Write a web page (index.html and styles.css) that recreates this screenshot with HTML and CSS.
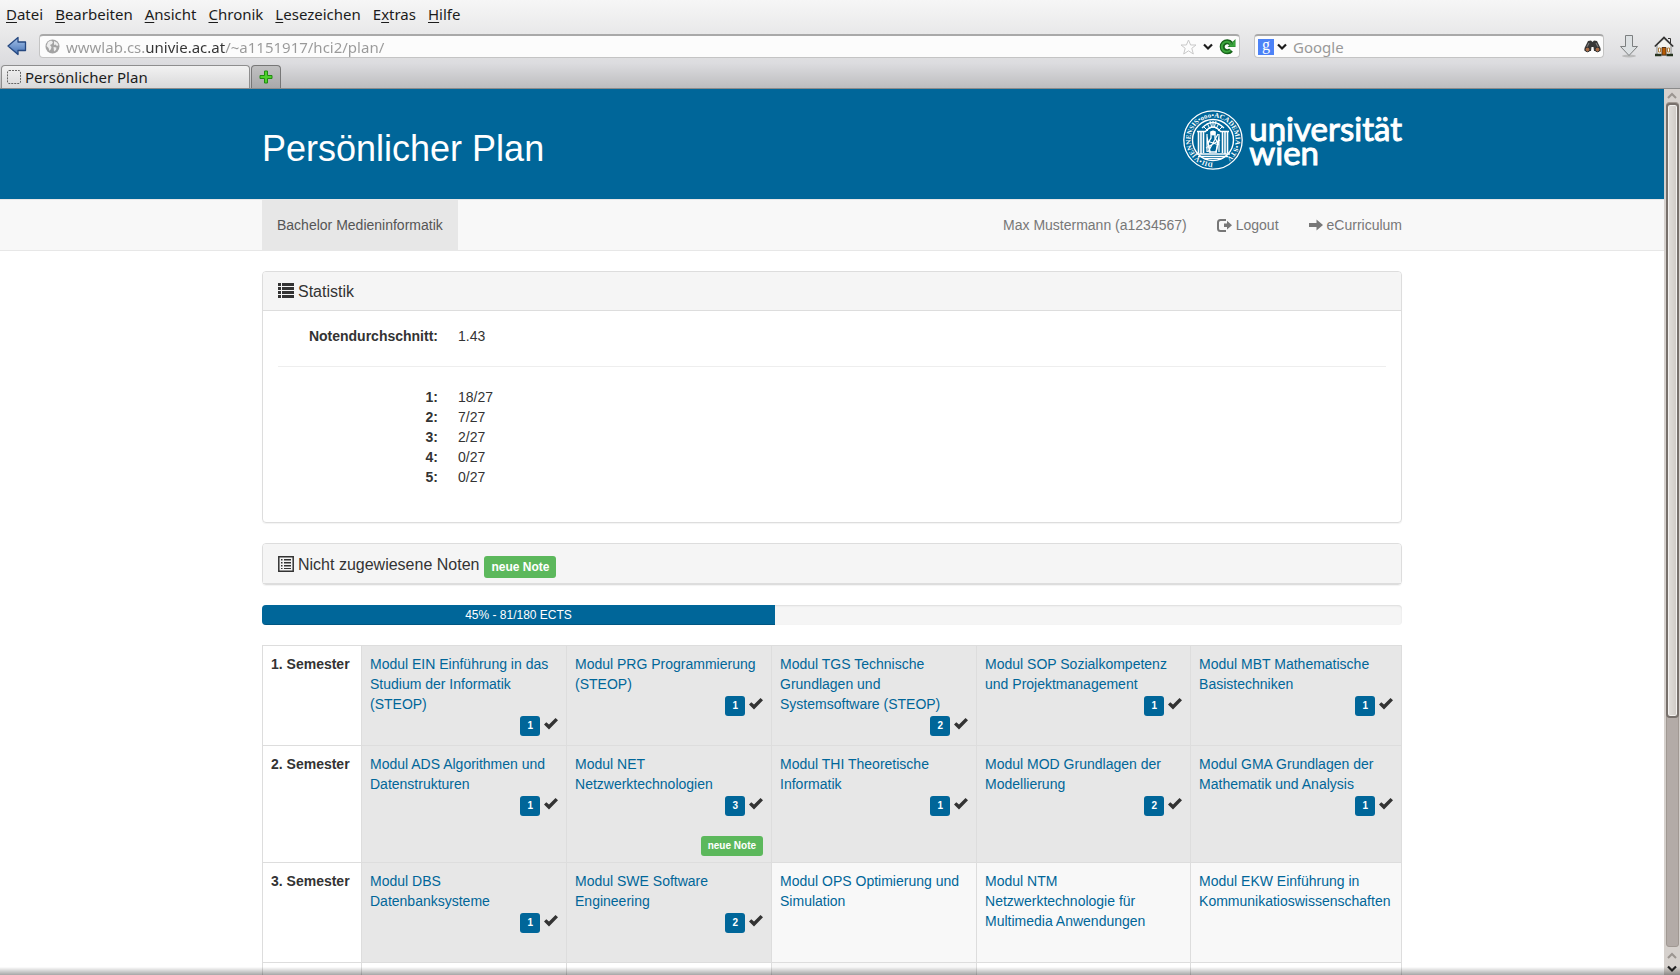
FILE: index.html
```html
<!DOCTYPE html>
<html lang="de">
<head>
<meta charset="utf-8">
<title>Persönlicher Plan</title>
<link rel="stylesheet" href="styles.css">
</head>
<body>
<svg class="sprite" aria-hidden="true">
  <symbol id="ok" viewBox="0 0 14 12"><path d="M0 6.500 2.300 4.200 5 6.500 11.500 0 14 2.300 5 11.500Z"/></symbol>
  <symbol id="chevron" viewBox="0 0 10 8"><path d="M1 1.500 5 5.500 9 1.500" fill="none" stroke="currentColor" stroke-width="2.200"/></symbol>
</svg>

<div class="chrome">
  <nav class="menubar" aria-label="Menü">
    <button><u>D</u>atei</button>
    <button><u>B</u>earbeiten</button>
    <button><u>A</u>nsicht</button>
    <button><u>C</u>hronik</button>
    <button><u>L</u>esezeichen</button>
    <button>E<u>x</u>tras</button>
    <button><u>H</u>ilfe</button>
  </nav>
  <div class="toolbar">
    <button class="tool" aria-label="Zurück">
      <svg width="20" height="20" viewBox="0 0 20 20"><defs><linearGradient id="gb" x2="0" y2="1"><stop stop-color="#a8c4ea"/><stop offset="1" stop-color="#4270b4"/></linearGradient></defs><path d="M1 10 11 1.500V6H18.500V14.500H11V18.500Z" fill="url(#gb)" stroke="#25477f" stroke-width="1.300" stroke-linejoin="round"/></svg>
    </button>
    <div class="field field-url">
      <svg width="15" height="15" viewBox="0 0 15 15"><circle cx="7.500" cy="7.500" r="7" fill="#a3a3a3"/><path d="M3 3 6 1.500 8 3 7 5 5 6 6.500 8 6 10 4.500 12 3.500 9 1.500 7ZM9 2 12 3.500 13.500 6 12 7 10.500 5.500 9 6ZM8.500 8 11.500 8.500 11 11 9 12.500Z" fill="#ededed"/></svg>
      <input class="url" type="text" aria-label="Adresse" value="wwwlab.cs.univie.ac.at/~a1151917/hci2/plan/">
      <button aria-label="Lesezeichen setzen"><svg width="17" height="16" viewBox="0 0 17 16"><path d="M8.500 1 10.600 6H16L11.800 9.300 13.300 15 8.500 11.800 3.700 15 5.200 9.300 1 6H6.400Z" fill="#fdfdfd" stroke="#c9c9c9" stroke-linejoin="round"/></svg></button>
      <button aria-label="Verlauf"><svg width="10" height="8"><use href="#chevron"/></svg></button>
      <button aria-label="Neu laden"><svg width="17" height="16" viewBox="0 0 17 16"><path d="M12 11A5 5 0 1 1 12 4.500" fill="none" stroke="#17621a" stroke-width="5"/><path d="M16.500 0V8H8.500Z" fill="#23842a"/><path d="M11.500 11.200A5 5 0 1 1 11.500 4.500M11 6.500H15V2.500" fill="none" stroke="#3ba63c" stroke-width="2"/></svg></button>
    </div>
    <div class="field field-search">
      <button class="engine" aria-label="Suchmaschine"><span>g</span><svg width="10" height="8"><use href="#chevron"/></svg></button>
      <input type="text" aria-label="Suche" placeholder="Google">
      <button aria-label="Suchen"><svg width="17" height="13" viewBox="0 0 17 13"><path d="M4 1 7 .5 8.500 2 10 .5 13 1 16.500 8V11H10L9.500 7H7.500L7 11H.5V8Z" fill="#383838"/><path d="M5 3 3 7M12 3 14 7" stroke="#8a8a8a"/><circle cx="3.500" cy="9.500" r="2.300" fill="#a86a45" stroke="#333"/><circle cx="13.500" cy="9.500" r="2.300" fill="#a86a45" stroke="#333"/></svg></button>
    </div>
    <button class="tool" aria-label="Downloads">
      <svg width="20" height="24" viewBox="0 0 20 24"><ellipse cx="10" cy="22" rx="7" ry="1.500" fill="#bbb"/><path d="M6.500 1.500H13.500V12.500H18.500L10 21.500 1.500 12.500H6.500Z" fill="#dde1e3" stroke="#7c7f80" stroke-linejoin="round"/></svg>
    </button>
    <button class="tool" aria-label="Startseite">
      <svg width="20" height="21" viewBox="0 0 20 21"><path d="M3 9 10 2.500 17 9V19H3Z" fill="#f3f3ef" stroke="#888"/><path d="M14 2.500H16.500V7" fill="#eee" stroke="#333"/><path d="M.8 10.500 10 1.500 19.200 10.500" fill="none" stroke="#333" stroke-width="1.700"/><path d="M8 11.500H12V19H8Z" fill="#b85a00" stroke="#59371b"/><path d="M4.500 12H6.500V16H4.500ZM13.500 12H15.500V16H13.500Z" fill="#fff" stroke="#b08040"/><path d="M1 19H7.500M12.500 19H19" stroke="#26331f" stroke-width="2.500"/></svg>
    </button>
  </div>
  <div class="tabs">
    <button class="tab"><svg width="14" height="14" viewBox="0 0 14 14"><rect x=".5" y=".5" width="13" height="13" rx="1.500" fill="none" stroke="#666" stroke-dasharray="2 1"/></svg>Persönlicher Plan</button>
    <button class="tab-new" aria-label="Neuer Tab"><svg width="14" height="14" viewBox="0 0 14 14"><path d="M5.500 1H8.500V5.500H13V8.500H8.500V13H5.500V8.500H1V5.500H5.500Z" fill="#4ed02c" stroke="#218a12" stroke-linejoin="round"/></svg></button>
  </div>
</div>

<div class="viewport">
  <div class="page">
    <header class="banner">
      <div class="container banner-row">
        <h1>Persönlicher Plan</h1>
        <a class="logo" href="#" aria-label="Universität Wien">
          <svg width="60" height="60" viewBox="0 0 60 60">
            <defs><path id="ring" d="M30 52.500A22.500 22.500 0 1 1 30.100 52.500"/></defs>
            <g fill="none" stroke="#fff">
              <circle cx="30" cy="30" r="29.200" stroke-width="1.300"/>
              <circle cx="30" cy="30" r="20.500" stroke-width="1.400"/>
              <path d="M15.500 22V43M18 21V44M20.500 22V43M39.500 22V43M42 21V44M44.500 22V43" stroke-width="1.600"/>
              <path d="M14 21.500H22M38 21.500H46M13 44H47M15 46.500H45M22 22Q30 12 38 22M19 18Q30 7 41 18" stroke-width="1.300"/>
              <path d="M30 11V18M27 11 29 18M33 11 31 18M24 13 27 19M36 13 33 19M20 16 25 21M40 16 35 21"/>
              <path d="M24 26 27 43M36 26 33 43M24 31 36 35M23 38 37 30M25 42 35 24M24 24V42M36 24V42M20 48.500H40" stroke-width="1.200"/>
              <path d="M28 22H32V28L35 33 33 42H27L25 33 28 28Z" stroke-width="1.400"/>
            </g>
            <circle cx="30" cy="23" r="2.500" fill="#fff"/>
            <text class="seal-text"><textPath href="#ring">DII•VIENNENSIS•ooo•ACADEMIA•STV</textPath></text>
          </svg>
          <span class="logo-text">universität<br>wien</span>
        </a>
      </div>
    </header>

    <nav class="navbar" aria-label="Navigation">
      <div class="container navbar-row">
        <a class="active" href="#">Bachelor Medieninformatik</a>
        <div class="nav-right">
          <a href="#">Max Mustermann (a1234567)</a>
          <a href="#"><svg width="15" height="13" viewBox="0 0 15 13"><path d="M9 1H3.500Q1 1 1 3.500V9.500Q1 12 3.500 12H9" fill="none" stroke="currentColor" stroke-width="2"/><path d="M7 4.500H10V1.800L15 6.200 10 10.600V8H7Z"/></svg>Logout</a>
          <a href="#"><svg width="14" height="12" viewBox="0 0 14 12"><path d="M0 4H7.500V.5L14 6 7.500 11.500V8H0Z"/></svg>eCurriculum</a>
        </div>
      </div>
    </nav>

    <main class="container">
      <section class="panel">
        <h3 class="panel-heading"><svg width="16" height="15" viewBox="0 0 16 15"><path d="M0 0H3V3H0ZM4 0H16V3H4ZM0 4H3V7H0ZM4 4H16V7H4ZM0 8H3V11H0ZM4 8H16V11H4ZM0 12H3V15H0ZM4 12H16V15H4Z"/></svg>Statistik</h3>
        <div class="panel-body">
          <dl><dt>Notendurchschnitt:</dt><dd>1.43</dd></dl>
          <hr>
          <dl>
            <dt>1:</dt><dd>18/27</dd>
            <dt>2:</dt><dd>7/27</dd>
            <dt>3:</dt><dd>2/27</dd>
            <dt>4:</dt><dd>0/27</dd>
            <dt>5:</dt><dd>0/27</dd>
          </dl>
        </div>
      </section>

      <section class="panel">
        <h3 class="panel-heading panel-closed"><svg width="16" height="16" viewBox="0 0 16 16"><path d="M.8.800H15.200V15.200H.8Z" fill="none" stroke="currentColor" stroke-width="1.500"/><path d="M3 3H4.500V4.500H3ZM6 3H13V4.500H6ZM3 6H4.500V7.500H3ZM6 6H13V7.500H6ZM3 9H4.500V10.500H3ZM6 9H13V10.500H6ZM3 12H4.500V13H3ZM6 12H13V13H6Z"/></svg>Nicht zugewiesene Noten <span class="label label-new label-large">neue Note</span></h3>
      </section>

      <div class="progress" role="progressbar" aria-valuenow="45" aria-valuemin="0" aria-valuemax="100">
        <div class="progress-bar" style="width:45%">45% - 81/180 ECTS</div>
      </div>

      <table class="plan">
        <colgroup><col class="c-sem"><col class="c-mod"><col class="c-mod"><col class="c-mod"><col class="c-wide"><col></colgroup>
        <tbody>
        <tr>
          <th scope="row">1. Semester</th>
          <td class="done"><a href="#">Modul EIN Einführung in das Studium der Informatik (STEOP)</a><div class="marks"><span class="label">1</span><svg><use href="#ok"/></svg></div></td>
          <td class="done"><a href="#">Modul PRG Programmierung (STEOP)</a><div class="marks"><span class="label">1</span><svg><use href="#ok"/></svg></div></td>
          <td class="done"><a href="#">Modul TGS Technische Grundlagen und Systemsoftware (STEOP)</a><div class="marks"><span class="label">2</span><svg><use href="#ok"/></svg></div></td>
          <td class="done"><a href="#">Modul SOP Sozialkompetenz und Projektmanagement</a><div class="marks"><span class="label">1</span><svg><use href="#ok"/></svg></div></td>
          <td class="done"><a href="#">Modul MBT Mathematische Basistechniken</a><div class="marks"><span class="label">1</span><svg><use href="#ok"/></svg></div></td>
        </tr>
        <tr>
          <th scope="row">2. Semester</th>
          <td class="done"><a href="#">Modul ADS Algorithmen und Datenstrukturen</a><div class="marks"><span class="label">1</span><svg><use href="#ok"/></svg></div></td>
          <td class="done"><a href="#">Modul NET Netzwerktechnologien</a><div class="marks"><span class="label">3</span><svg><use href="#ok"/></svg></div><div class="news"><span class="label label-new">neue Note</span></div></td>
          <td class="done"><a href="#">Modul THI Theoretische Informatik</a><div class="marks"><span class="label">1</span><svg><use href="#ok"/></svg></div></td>
          <td class="done"><a href="#">Modul MOD Grundlagen der Modellierung</a><div class="marks"><span class="label">2</span><svg><use href="#ok"/></svg></div></td>
          <td class="done"><a href="#">Modul GMA Grundlagen der Mathematik und Analysis</a><div class="marks"><span class="label">1</span><svg><use href="#ok"/></svg></div></td>
        </tr>
        <tr>
          <th scope="row">3. Semester</th>
          <td class="done"><a href="#">Modul DBS Datenbanksysteme</a><div class="marks"><span class="label">1</span><svg><use href="#ok"/></svg></div></td>
          <td class="done"><a href="#">Modul SWE Software Engineering</a><div class="marks"><span class="label">2</span><svg><use href="#ok"/></svg></div></td>
          <td class="open"><a href="#">Modul OPS Optimierung und Simulation</a></td>
          <td class="open"><a href="#">Modul NTM Netzwerktechnologie für Multimedia Anwendungen</a></td>
          <td class="open"><a href="#">Modul EKW Einführung in Kommunikatioswissenschaften</a></td>
        </tr>
        <tr><th></th><td></td><td></td><td class="open"></td><td></td><td></td></tr>
        </tbody>
      </table>
    </main>
  </div>
  <div class="scrollbar" aria-hidden="true">
    <svg class="dim" width="10" height="8" viewBox="0 0 10 8"><path d="M1 6 5 2 9 6" fill="none" stroke="currentColor" stroke-width="2"/></svg>
    <div class="trough"><div class="thumb"></div></div>
    <svg class="dim" width="10" height="8" viewBox="0 0 10 8"><path d="M1 6 5 2 9 6" fill="none" stroke="currentColor" stroke-width="2"/></svg>
    <svg width="10" height="8"><use href="#chevron"/></svg>
  </div>
</div>
<div class="edge-shadow"></div>
</body>
</html>
```
FILE: styles.css
```css
* { box-sizing: border-box; }
body {
  margin: 0;
  height: 100vh;
  display: flex;
  flex-direction: column;
  overflow: hidden;
  background: #fff;
  color: #333;
  font: 14px/20px "Liberation Sans", Arial, sans-serif;
}
a { color: #069; text-decoration: none; }
svg { fill: currentColor; flex: none; }
button { border: 0; padding: 0; background: none; font: inherit; color: inherit; display: flex; align-items: center; }
.sprite { position: absolute; width: 0; height: 0; }

/* Browser window */
.chrome {
  flex: none;
  height: 89px;
  display: flex;
  flex-direction: column;
  background: linear-gradient(#f6f6f6, #e8e8e9 40%, #dcdcdf 72%, #bdbdbf);
  border-bottom: 1px solid #8b8b8b;
  color: #1c1c1c;
  font: 15px/20px "Noto Sans", "Open Sans", sans-serif;
}
.menubar { display: flex; gap: 12px; padding: 4px 6px 0; height: 29px; }
.menubar button { display: block; height: 20px; }
.menubar u { text-underline-offset: 2px; }
.toolbar { display: flex; align-items: center; height: 34px; padding: 0 6px 0 7px; }
.tool { flex: none; }
.field {
  display: flex;
  align-items: center;
  height: 24px;
  background: #fcfcfc;
  border: 1px solid #c4c4c4;
  border-top: 2px solid #a9a9a9;
  border-radius: 4px;
  min-width: 0;
}
.field input {
  flex: 1;
  min-width: 0;
  border: 0;
  padding: 0;
  background: none;
  outline: 0;
  font: 15px/20px "Noto Sans", "Open Sans", sans-serif;
}
.field-url { flex: 1; margin: 0 14px 0 12px; padding: 0 3px 0 5px; gap: 6px; }
.field .url {
  color: transparent;
  background: linear-gradient(90deg, #999 79px, #333 79px, #333 159px, #999 159px);
  -webkit-background-clip: text;
  background-clip: text;
}
.field-search { width: 350px; margin-right: 15px; padding: 0 2px 0 3px; gap: 6px; }
.field-search input::placeholder { color: #999; opacity: 1; }
.engine { gap: 3px; }
.engine span {
  width: 16px;
  height: 16px;
  background: #4c82f7;
  color: #fff;
  font: 16px/12px "Liberation Serif", serif;
}
.toolbar .tool + .tool { margin-left: 15px; }
.tabs { display: flex; align-items: flex-end; gap: 1px; flex: 1; padding-left: 1px; }
.tab, .tab-new { height: 23px; border: 1px solid #8e8e8e; border-bottom: 0; border-radius: 4px 4px 0 0; }
.tab { width: 249px; padding-left: 5px; gap: 4px; background: linear-gradient(#f2f2f2, #d9d9da); }
.tab-new { width: 30px; justify-content: center; background: linear-gradient(#c0c0c1, #a9a9ab); border-color: #777; }

.viewport { flex: 1; min-height: 0; display: flex; }
.page { flex: 1; min-width: 0; overflow: hidden; }
.container { max-width: 1140px; margin: 0 auto; }

/* Banner */
.banner { background: #069; color: #fff; }
.banner-row { display: flex; justify-content: space-between; align-items: center; height: 110px; }
h1 { margin: 10px 0 0; font-size: 36px; line-height: 40px; font-weight: 400; }
.logo { display: flex; align-items: center; gap: 6px; color: #fff; padding-bottom: 8px; }
.logo-text { font: 33px/24px Lato, sans-serif; -webkit-text-stroke: 1px #fff; }
.seal-text { font: bold 7px "Liberation Serif", serif; fill: #fff; }

/* Navigation */
.navbar { background: #f8f8f8; border: solid #e7e7e7; border-width: 1px 0; margin-bottom: 20px; }
.navbar-row, .nav-right { display: flex; justify-content: space-between; }
.navbar a { display: flex; align-items: center; gap: 4px; padding: 15px; color: #777; }
.navbar .active { background: #e7e7e7; color: #555; }
.nav-right a:last-child { padding-right: 0; }

/* Panels */
.panel { margin-bottom: 20px; border: 1px solid #ddd; border-radius: 4px; box-shadow: 0 1px 1px rgba(0, 0, 0, .05); }
.panel-heading {
  display: flex;
  gap: 4px;
  margin: 0;
  padding: 11px 15px 9px;
  background: #f5f5f5;
  border-bottom: 1px solid #ddd;
  border-radius: 3px 3px 0 0;
  font-size: 16px;
  line-height: 18px;
  font-weight: 400;
}
.panel-closed { padding: 12px 15px 5px; }
.panel-body { padding: 15px; }
dl { display: grid; grid-template-columns: 160px 1fr; column-gap: 20px; margin: 0 0 20px; }
dt { font-weight: 700; text-align: right; }
dd { margin: 0; }
hr { border: 0; border-top: 1px solid #eee; margin: 20px 0; }

.label {
  padding: 0 7px;
  border-radius: 3px;
  background: #069;
  color: #fff;
  font-size: 10px;
  line-height: 20px;
  font-weight: 700;
}
.label-new { background: #5cb85c; }
.label-large { margin-left: 1px; font-size: 12px; line-height: 22px; }

.progress { height: 20px; margin-bottom: 20px; background: #f5f5f5; border-radius: 4px; overflow: hidden; box-shadow: inset 0 1px 2px rgba(0, 0, 0, .1); }
.progress-bar { height: 20px; background: #069; box-shadow: inset 0 -1px 0 rgba(0, 0, 0, .15); color: #fff; font-size: 12px; text-align: center; }

/* Study plan */
.plan { width: 100%; table-layout: fixed; border-collapse: collapse; }
.c-sem { width: 99px; }
.c-mod { width: 18%; }
.c-wide { width: 214px; }
.plan tr { height: 100px; }
.plan th, .plan td { padding: 8px 8px 6px; border: 1px solid #ddd; vertical-align: top; text-align: left; }
.plan td a { display: block; }
.done { background: #e7e7e7; }
.open { background: #f8f8f8; }
.marks { display: flex; justify-content: flex-end; gap: 4px; padding-top: 2px; }
.marks svg { width: 14px; height: 12px; margin-top: 2px; }
.news { display: flex; justify-content: flex-end; padding-top: 20px; }

/* Scrollbar */
.scrollbar { width: 16px; display: flex; flex-direction: column; align-items: center; gap: 5px; padding: 3px 1px 2px; background: #d6d1cd; color: #222; }
.dim { color: #9b9590; }
.trough { flex: 1; width: 13px; background: #b3aba7; border: 1px solid #a09892; border-radius: 3px; margin-top: -3px; }
.thumb { height: 73%; margin: 0 -1px; background: linear-gradient(90deg, #e2dfdb, #cfcac5); border: 2px solid #77706b; border-radius: 4px; box-shadow: inset 0 0 0 1px #f3f1ef; }

.edge-shadow { position: fixed; left: 0; right: 0; bottom: 0; height: 8px; background: linear-gradient(rgba(0, 0, 0, 0), rgba(0, 0, 0, .35)); pointer-events: none; }
```
